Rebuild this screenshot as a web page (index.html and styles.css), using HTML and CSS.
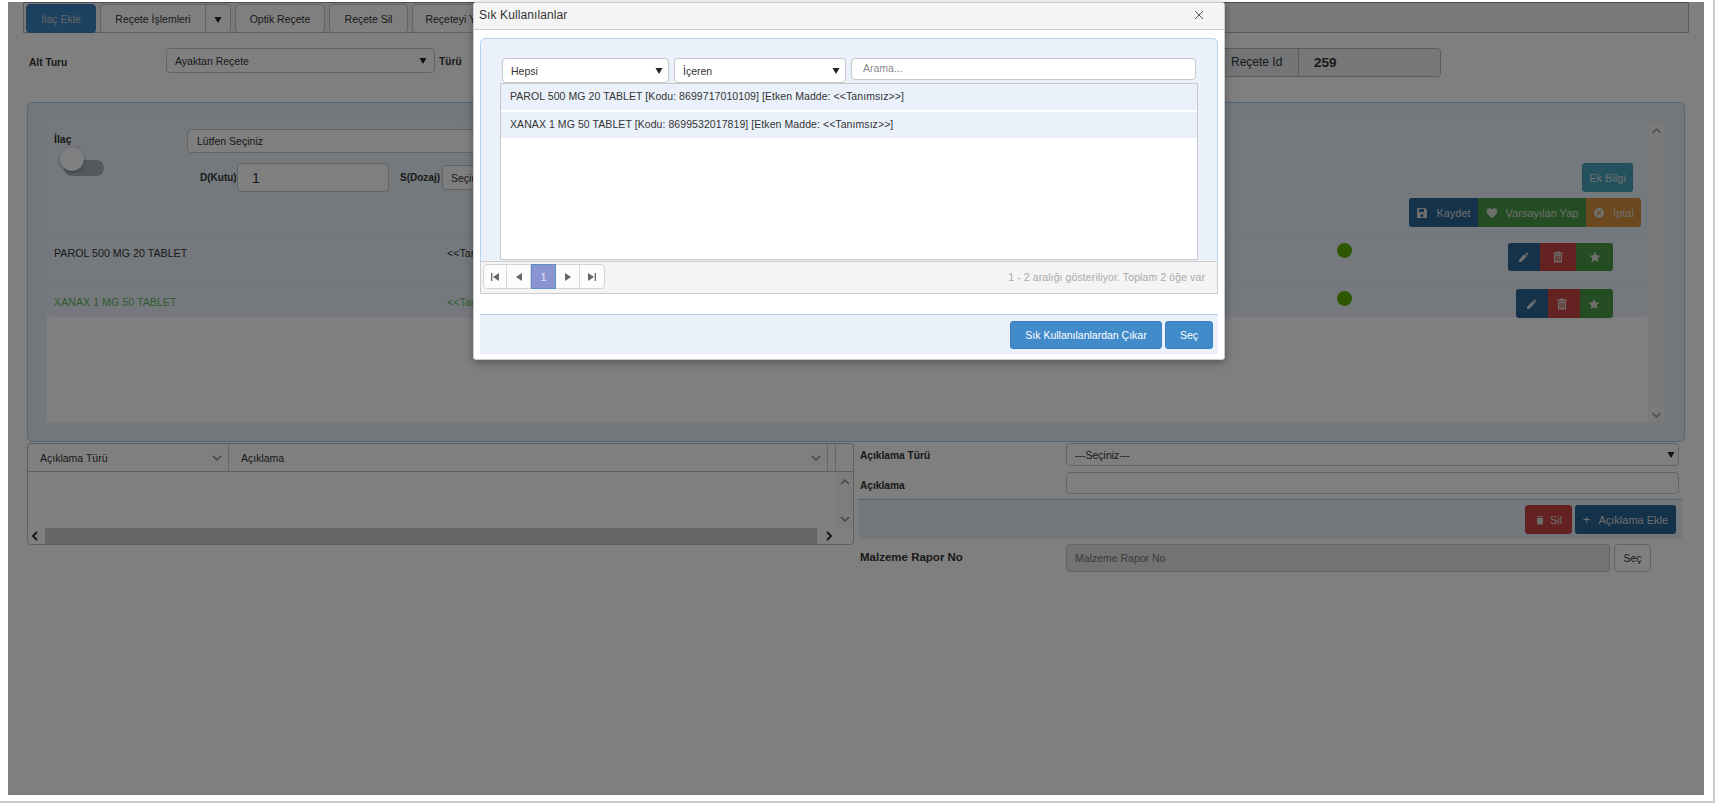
FILE: index.html
```html
<!DOCTYPE html>
<html lang="tr">
<head>
<meta charset="utf-8">
<title>Reçete</title>
<link rel="stylesheet" href="styles.css">
</head>
<body>
<svg class="defs" width="0" height="0" aria-hidden="true">
  <symbol id="i-down" viewBox="0 0 8 8"><path d="M0 1h8L4 8z"/></symbol>
  <symbol id="i-save" viewBox="0 0 12 12"><path fill-rule="evenodd" d="M1.500 1H9l2 2v7.500a.5.5 0 0 1-.5.5h-9a.5.5 0 0 1-.5-.5v-9a.5.5 0 0 1 .5-.5zM3 2v3h5V2zm3 5a1.500 1.500 0 1 0 0 3 1.500 1.500 0 0 0 0-3z"/></symbol>
  <symbol id="i-heart" viewBox="0 0 12 12"><path d="M6 11.200C3 8.700.6 6.800.6 4.200.6 2.500 1.900 1.200 3.500 1.200c1 0 1.900.5 2.500 1.400.6-.9 1.500-1.400 2.500-1.400 1.600 0 2.900 1.300 2.900 3 0 2.600-2.400 4.500-5.400 7z"/></symbol>
  <symbol id="i-cancel" viewBox="0 0 12 12"><path fill-rule="evenodd" d="M6 1a5 5 0 1 1 0 10A5 5 0 0 1 6 1zM4.400 3.700l-.7.7L5.300 6 3.700 7.600l.7.7L6 6.700l1.600 1.600.7-.7L6.700 6l1.600-1.600-.7-.7L6 5.300z"/></symbol>
  <symbol id="i-pencil" viewBox="0 0 12 12"><path d="M8.600 1.200l2.200 2.200-1.200 1.200-2.200-2.200zM6.700 3.100l2.200 2.200-5.700 5.700H1V8.800z"/></symbol>
  <symbol id="i-trash" viewBox="0 0 12 12"><path fill-rule="evenodd" d="M4.500.6h3l.5 1h3v1.200H1V1.600h3zM2 3.500h8v7.900H2zm1.400 1.200v5.500h1.100V4.700zm2.100 0v5.500h1.100V4.700zm2.100 0v5.500h1.100V4.700z"/></symbol>
  <symbol id="i-can" viewBox="0 0 12 12"><path d="M2.500 1.500h7v1h-7zM2.500 3.200h7v7.300a1 1 0 0 1-1 1h-5a1 1 0 0 1-1-1z"/></symbol>
  <symbol id="i-star" viewBox="0 0 12 12"><path d="M6 .8l1.600 3.500 3.800.4-2.800 2.600.8 3.800L6 9.200l-3.400 1.900.8-3.800L.6 4.700l3.800-.4z"/></symbol>
  <symbol id="i-first" viewBox="0 0 10 10"><path d="M1 1h1.300v8H1zM9 1v8L3 5z"/></symbol>
  <symbol id="i-prev" viewBox="0 0 10 10"><path d="M8 1v8L2 5z"/></symbol>
  <symbol id="i-next" viewBox="0 0 10 10"><path d="M2 1v8l6-4z"/></symbol>
  <symbol id="i-last" viewBox="0 0 10 10"><path d="M1 1v8l6-4zM7.700 1H9v8H7.700z"/></symbol>
  <symbol id="i-up-chev" viewBox="0 0 10 10"><path d="M1 7l4-4 4 4" fill="none" stroke="currentColor" stroke-width="1.500"/></symbol>
  <symbol id="i-down-chev" viewBox="0 0 10 10"><path d="M1 3l4 4 4-4" fill="none" stroke="currentColor" stroke-width="1.500"/></symbol>
  <symbol id="i-left-chev" viewBox="0 0 10 10"><path d="M7 1L3 5l4 4" fill="none" stroke="currentColor" stroke-width="2"/></symbol>
  <symbol id="i-right-chev" viewBox="0 0 10 10"><path d="M3 1l4 4-4 4" fill="none" stroke="currentColor" stroke-width="2"/></symbol>
</svg>

<div class="frame">
  <div class="toolbar">
    <button class="tb tb-primary tb-first">İlaç Ekle</button>
    <div class="split">
      <button class="tb tb-split-main">Reçete İşlemleri</button>
      <button class="tb tb-split-arrow"><svg class="arrow"><use href="#i-down"/></svg></button>
    </div>
    <button class="tb tb-optik">Optik Reçete</button>
    <button class="tb tb-sil">Reçete Sil</button>
    <button class="tb tb-yaz">Reçeteyi Yazdır</button>
  </div>

  <div class="head">
    <label class="lbl-bold alt">Alt Turu</label>
    <div class="fake-select alt-select"><span>Ayaktan Reçete</span><svg class="arrow"><use href="#i-down"/></svg></div>
    <label class="lbl-bold turu">Türü</label>
    <div class="idgroup">
      <span class="id-addon">Reçete Id</span>
      <span class="id-value">259</span>
    </div>
  </div>

  <section class="panel">
    <div class="scroller">
      <div class="content">
        <div class="form">
          <div class="form-left">
            <span class="lbl-ilac">İlaç</span>
            <div class="toggle"><span class="knob"></span></div>
          </div>
          <div class="form-mid">
            <div class="fake-select drug-select"><span>Lütfen Seçiniz</span></div>
            <div class="dose-row">
              <label class="lbl-bold dk">D(Kutu)</label>
              <div class="qty">1</div>
              <label class="lbl-bold ds">S(Dozaj)</label>
              <div class="fake-select dose-select"><span>Seçiniz</span></div>
            </div>
          </div>
          <div class="form-right">
            <button class="btn btn-info ek">Ek Bilgi</button>
            <div class="group">
              <button class="btn btn-blue kaydet"><svg class="ico"><use href="#i-save"/></svg>Kaydet</button>
              <button class="btn btn-green varsayilan"><svg class="ico"><use href="#i-heart"/></svg>Varsayılan Yap</button>
              <button class="btn btn-orange iptal"><svg class="ico"><use href="#i-cancel"/></svg>İptal</button>
            </div>
          </div>
        </div>

        <div class="row row-a">
          <span class="cell-name">PAROL 500 MG 20 TABLET</span>
          <span class="cell-etken">&lt;&lt;Tanımsız&gt;&gt;</span>
          <span class="dot"></span>
          <div class="group actions">
            <button class="btn btn-blue act a-pen"><svg class="ico"><use href="#i-pencil"/></svg></button>
            <button class="btn btn-red act a-trash"><svg class="ico"><use href="#i-trash"/></svg></button>
            <button class="btn btn-green act a-star"><svg class="ico"><use href="#i-star"/></svg></button>
          </div>
        </div>
        <div class="row row-b">
          <span class="cell-name">XANAX 1 MG 50 TABLET</span>
          <span class="cell-etken">&lt;&lt;Tanımsız&gt;&gt;</span>
          <span class="dot"></span>
          <div class="group actions">
            <button class="btn btn-blue act b-pen"><svg class="ico"><use href="#i-pencil"/></svg></button>
            <button class="btn btn-red act b-trash"><svg class="ico"><use href="#i-trash"/></svg></button>
            <button class="btn btn-green act b-star"><svg class="ico"><use href="#i-star"/></svg></button>
          </div>
        </div>
      </div>
      <div class="vscroll">
        <svg class="chev"><use href="#i-up-chev"/></svg>
        <svg class="chev"><use href="#i-down-chev"/></svg>
      </div>
    </div>
  </section>

  <div class="lower">
    <div class="grid-box">
      <div class="grid-head">
        <div class="gh gh-1"><span>Açıklama Türü</span><svg class="chev-s"><use href="#i-down-chev"/></svg></div>
        <div class="gh gh-2"><span>Açıklama</span><svg class="chev-s"><use href="#i-down-chev"/></svg></div>
        <div class="gh gh-3"></div>
      </div>
      <div class="grid-body">
        <div class="grid-empty"></div>
        <div class="grid-vbar">
          <svg class="chev-s"><use href="#i-up-chev"/></svg>
          <svg class="chev-s"><use href="#i-down-chev"/></svg>
        </div>
      </div>
      <div class="grid-hbar">
        <svg class="chev-h"><use href="#i-left-chev"/></svg>
        <div class="thumb"></div>
        <svg class="chev-h"><use href="#i-right-chev"/></svg>
      </div>
    </div>

    <div class="note-form">
      <div class="nf-row nf-1">
        <label class="lbl-bold nf-label nf-label-mid">Açıklama Türü</label>
        <div class="fake-select nf-select"><span>---Seçiniz---</span><svg class="arrow"><use href="#i-down"/></svg></div>
      </div>
      <div class="nf-row nf-2">
        <label class="lbl-bold nf-label nf-label-low">Açıklama</label>
        <div class="nf-input"></div>
      </div>
      <div class="nf-actions">
        <button class="btn btn-red sil"><svg class="ico"><use href="#i-can"/></svg>Sil</button>
        <button class="btn btn-blue ekle"><span class="plus">+</span>Açıklama Ekle</button>
      </div>
      <div class="nf-row nf-3">
        <label class="lbl-bold nf-label rapor">Malzeme Rapor No</label>
        <div class="rapor-input">Malzeme Rapor No</div>
        <button class="tb rapor-btn">Seç</button>
      </div>
    </div>
  </div>
</div>

<div class="backdrop"></div>

<div class="modal">
  <header class="modal-title">
    <span>Sık Kullanılanlar</span>
    <svg class="close" viewBox="0 0 10 10"><path d="M1 1l8 8M9 1L1 9" stroke="#555" stroke-width="1" fill="none"/></svg>
  </header>
  <div class="modal-panel">
    <div class="m-filters">
      <div class="fake-select m-sel1"><span>Hepsi</span><svg class="arrow"><use href="#i-down"/></svg></div>
      <div class="fake-select m-sel2"><span>İçeren</span><svg class="arrow"><use href="#i-down"/></svg></div>
      <div class="m-search">Arama...</div>
    </div>
    <div class="m-list">
      <div class="m-item">PAROL 500 MG 20 TABLET [Kodu: 8699717010109] [Etken Madde: &lt;&lt;Tanımsız&gt;&gt;]</div>
      <div class="m-item">XANAX 1 MG 50 TABLET [Kodu: 8699532017819] [Etken Madde: &lt;&lt;Tanımsız&gt;&gt;]</div>
    </div>
    <div class="m-pager">
      <div class="pager">
        <span class="pg"><svg class="pgi"><use href="#i-first"/></svg></span>
        <span class="pg"><svg class="pgi"><use href="#i-prev"/></svg></span>
        <span class="pg pg-on">1</span>
        <span class="pg"><svg class="pgi"><use href="#i-next"/></svg></span>
        <span class="pg"><svg class="pgi"><use href="#i-last"/></svg></span>
      </div>
      <span class="pg-info">1 - 2 aralığı gösteriliyor. Toplam 2 öğe var</span>
    </div>
  </div>
  <footer class="modal-foot">
    <button class="m-btn m-remove">Sık Kullanılanlardan Çıkar</button>
    <button class="m-btn m-pick">Seç</button>
  </footer>
</div>
</body>
</html>
```

FILE: styles.css
```css
* { box-sizing: border-box; }
html, body { margin: 0; padding: 0; background: #fff; overflow: hidden; }
body { font-family: "Liberation Sans", Arial, sans-serif; font-size: 11px; color: #333; height: 812px; }
.defs { display: block; height: 0; }
button { font-family: inherit; font-size: 11px; cursor: pointer; margin: 0; }

.frame { width: 1715px; height: 803px; border-right: 2px solid #ccc; border-bottom: 2px solid #ccc; padding-top: 2px; overflow: hidden; }

.arrow { width: 8px; height: 7px; fill: #222; flex: none; }

.toolbar { margin-left: 23px; width: 1666px; height: 31px; border: 1px solid #b4b4b4; border-top-color: #999; background: #f5f5f5; display: flex; padding: 1px 0 0 2px; }
.tb { background: #fff; border: 1px solid #c8c8c8; border-radius: 4px; height: 29px; padding: 0; color: #333; font-size: 10.500px; }
.tb-primary { background: #3a82c0; border-color: #3b7fb8; color: #ccc; width: 70px; }
.split { display: flex; margin-left: 4px; }
.tb-split-main { width: 105px; border-radius: 4px 0 0 4px; border-right: 0; }
.tb-split-arrow { width: 26px; border-radius: 0 4px 4px 0; }
.tb-optik { width: 90px; margin-left: 4px; }
.tb-sil { width: 79px; margin-left: 4px; }
.tb-yaz { width: 100px; margin-left: 4px; }

.lbl-bold { font-weight: bold; color: #333; font-size: 10.200px; }

.fake-select { display: flex; align-items: center; justify-content: space-between; background: #fff; border: 1px solid #c8c8c8; border-radius: 4px; font-size: 10.500px; color: #333; }
.head { margin-top: 15px; height: 29px; display: flex; align-items: flex-start; padding-left: 29px; position: relative; }
.alt { width: 137px; line-height: 29px; }
.alt-select { width: 269px; height: 25px; padding: 0 7px 0 8px; }
.turu { margin-left: 4px; line-height: 27px; }
.idgroup { width: 241px; height: 29px; display: flex; border: 1px solid #b8b8b8; border-radius: 4px; overflow: hidden; margin-left: auto; margin-right: 272px; }
.id-addon { width: 98px; background: #e6eaee; border-right: 1px solid #b8b8b8; font-size: 12px; line-height: 27px; padding-left: 30px; color: #333; flex: none; }
.id-value { flex: 1; background: #eee; font-weight: bold; font-size: 13.500px; line-height: 27px; padding-left: 15px; color: #333; }

.panel { margin: 25px 0 0 27px; width: 1658px; height: 340px; background: #e7f0fb; border: 1px solid #a9c9e8; border-radius: 5px; padding: 19px 18px 19px 19px; }
.scroller { display: flex; height: 300px; }
.content { width: 1601px; background: #fff; display: flex; flex-direction: column; }
.vscroll { width: 17px; background: #f4f4f4; display: flex; flex-direction: column; justify-content: space-between; align-items: center; padding: 4px 0 2px; color: #999; }
.chev { width: 11px; height: 10px; }

.form { height: 112px; display: flex; background: #e9f2fb; }
.form-left { width: 140px; padding: 11px 0 0 7px; position: relative; }
.lbl-ilac { font-weight: bold; font-size: 10.500px; }
.toggle { margin: 15px 0 0 10px; width: 40px; height: 16px; border-radius: 8px; background: #a8b0b8; position: relative; }
.knob { position: absolute; left: -4px; top: -13px; width: 24px; height: 24px; border-radius: 50%; background: #fff; box-shadow: 0 1px 3px rgba(0,0,0,.4); }
.form-mid { width: 800px; padding-top: 7px; }
.drug-select { height: 24px; padding: 0 9px; }
.dose-row { display: flex; margin-top: 10px; align-items: flex-start; }
.dk { margin-left: 13px; width: 37px; line-height: 29px; font-size: 10px; }
.qty { width: 152px; height: 29px; border: 1px solid #c8c8c8; border-radius: 4px; background: #fff; font-size: 14px; line-height: 29px; padding-left: 14px; }
.ds { margin-left: 11px; width: 42px; line-height: 29px; font-size: 10px; }
.dose-select { width: 200px; height: 25px; margin-top: 2px; padding: 0 8px; }
.form-right { margin-left: auto; padding: 41px 7px 0 0; display: flex; flex-direction: column; align-items: flex-end; }

.btn { border: 0; color: #ddd; height: 29px; padding: 0; display: inline-flex; align-items: center; justify-content: center; font-size: 11px; }
.ico { width: 12px; height: 12px; fill: #ddd; flex: none; }
.btn-info { background: #46a4bc; border: 1px solid #3f98b0; border-radius: 3px; }
.btn-blue { background: #2a6496; }
.btn-green { background: #4a9a48; }
.btn-red { background: #c94444; }
.btn-orange { background: #d9913c; }
.ek { width: 51px; margin-right: 8px; }
.group { display: flex; border-radius: 3px; overflow: hidden; }
.form-right .group { margin-top: 6px; }
.kaydet { width: 69px; }
.varsayilan { width: 108px; }
.iptal { width: 55px; }
.kaydet .ico, .varsayilan .ico, .iptal .ico { margin-right: 8px; }

.row { display: flex; flex: none; padding-left: 7px; }
.row-a { height: 49px; background: #ebf3fb; border-top: 1px solid #dde6ef; border-bottom: 1px solid #dde6ef; padding-top: 12px; padding-right: 35px; }
.row-b { height: 34px; background: #ebf3fb; border-radius: 0 0 4px 4px; padding-top: 13px; padding-right: 35px; }
.cell-name { width: 393px; font-size: 10.700px; line-height: 13px; color: #333; }
.row-b .cell-name, .row-b .cell-etken { color: #5cb85c; }
.cell-etken { width: 890px; font-size: 10.700px; line-height: 13px; color: #333; flex: none; }
.dot { width: 15px; height: 15px; border-radius: 50%; background: #5cb000; margin-top: -4px; flex: none; }
.row-b .dot { margin-top: -5px; }
.row-a .actions { margin: -4px 0 0 auto; height: 28px; }
.row-b .actions { margin: -7px 0 0 auto; height: 29px; }
.act { height: 100%; }
.a-pen { width: 32px; } .a-trash { width: 36px; } .a-star { width: 37px; }
.b-pen { width: 32px; } .b-trash { width: 32px; padding-right: 4px; } .b-star { width: 33px; padding-right: 5px; }

.lower { display: flex; margin: 1px 0 0 27px; }
.grid-box { width: 827px; height: 102px; border: 1px solid #bdbdbd; border-radius: 4px; background: #fff; display: flex; flex-direction: column; }
.grid-head { display: flex; height: 28px; border-bottom: 1px solid #bdbdbd; flex: none; }
.gh { display: flex; align-items: center; justify-content: space-between; font-size: 10.500px; color: #333; border-right: 1px solid #ccc; }
.gh-1 { width: 201px; padding: 0 6px 0 12px; }
.gh-2 { width: 599px; padding: 0 6px 0 12px; }
.gh-3 { width: 8px; }
.chev-s { width: 10px; height: 10px; color: #888; }
.grid-body { flex: 1; display: flex; }
.grid-empty { flex: 1; }
.grid-vbar { width: 16px; display: flex; flex-direction: column; justify-content: space-between; align-items: center; padding: 5px 0 4px; background: #fafafa; }
.grid-hbar { height: 16px; display: flex; align-items: center; padding: 0 2px; flex: none; }
.chev-h { width: 10px; height: 10px; color: #333; flex: none; }
.thumb { width: 772px; height: 16px; background: #cdcdcd; margin: 0 7px 0 5px; }

.note-form { margin-left: 4px; width: 828px; display: flex; flex-direction: column; }
.nf-row { display: flex; align-items: center; }
.nf-label { width: 208px; padding-left: 2px; }
.nf-label-mid { padding-top: 2px; }
.nf-label-low { padding-top: 4px; }
.nf-1 { height: 23px; }
.nf-select { width: 613px; height: 23px; padding: 0 3px 0 8px; }
.nf-2 { height: 22px; margin-top: 6px; }
.nf-input { width: 613px; height: 22px; background: #fff; border: 1px solid #c8c8c8; border-radius: 4px; }
.nf-actions { margin-top: 5px; height: 40px; width: 824px; background: #e7f0fb; border-top: 1px solid #a9c9e8; display: flex; justify-content: flex-end; padding: 5px 6px 0 0; gap: 3px; }
.sil { width: 47px; border: 1px solid #c04040; border-radius: 3px; }
.sil .ico { margin-right: 5px; width: 10px; }
.ekle { width: 101px; border-radius: 3px; }
.plus { font-size: 13px; margin-right: 8px; }
.nf-3 { margin-top: 5px; height: 28px; }
.rapor { font-size: 11.500px; padding-bottom: 2px; }
.rapor-input { width: 544px; height: 28px; background: #e6e6e6; border: 1px solid #c8c8c8; border-radius: 3px; color: #777; font-size: 10.500px; line-height: 26px; padding-left: 8px; }
.rapor-btn { width: 37px; height: 28px; margin-left: 4px; }

.backdrop { position: absolute; left: 8px; top: 2px; width: 1696px; height: 793px; background: rgba(0,0,0,.5); }

.modal { position: absolute; left: 473px; top: 2px; width: 752px; height: 358px; background: #fff; border: 1px solid #ccc; border-radius: 3px; box-shadow: 0 2px 8px rgba(0,0,0,.35); padding-bottom: 6px; display: flex; flex-direction: column; }
.modal-title { height: 27px; flex: none; background: #f4f4f4; border-bottom: 1px solid #ccc; display: flex; align-items: center; justify-content: space-between; padding: 0 20px 2px 5px; font-size: 12px; letter-spacing: .1px; color: #333; }
.close { width: 10px; height: 10px; }
.modal-panel { margin: 8px 6px 0 6px; height: 256px; background: #eaf1fa; border: 1px solid #b6d4f1; border-radius: 5px 5px 0 0; display: flex; flex-direction: column; }
.m-filters { display: flex; padding: 19px 0 0 21px; height: 44px; flex: none; align-items: flex-start; }
.fake-select.m-sel1 { width: 167px; height: 25px; padding: 0 3px 0 8px; }
.fake-select.m-sel2 { width: 172px; height: 25px; padding: 0 3px 0 8px; margin-left: 5px; }
.fake-select.m-sel1 .arrow, .fake-select.m-sel2 .arrow { margin-right: 2px; }
.m-search { width: 345px; height: 22px; margin-left: 5px; background: #fff; border: 1px solid #c8c8c8; border-radius: 4px; color: #888; font-size: 10.500px; line-height: 18px; padding-left: 11px; }
.m-list { margin-left: 19px; width: 698px; height: 177px; background: #fff; border: 1px solid #c8c8c8; flex: none; }
.m-item { height: 26px; background: #eaf1fa; margin-bottom: 2px; font-size: 10.500px; letter-spacing: .073px; line-height: 25px; padding-left: 9px; color: #333; }
.m-pager { height: 33px; flex: none; background: #f4f4f4; border: 1px solid #ccc; margin: 1px -1px 0 -1px; display: flex; align-items: center; justify-content: space-between; padding: 0 12px 2px 2px; }
.pager { display: flex; height: 25px; border: 1px solid #d4d4d4; border-radius: 4px; background: #fcfcfc; }
.pg { width: 24px; display: flex; align-items: center; justify-content: center; border-right: 1px solid #d8d8d8; font-size: 11px; }
.pg:first-child { width: 23px; }
.pg:last-child { border-right: 0; }
.pg-on { width: 25px; background: #8a94d1; color: #e4e4f4; border: 1px solid #5a8fc8; margin: -1px 0; }
.pgi { width: 10px; height: 10px; fill: #666; }
.pg-info { font-size: 10.500px; letter-spacing: .1px; color: #aaa; }
.modal-foot { margin: 20px 6px 0 6px; height: 40px; flex: none; background: #eaf1fa; border-top: 1px solid #b6d4f1; display: flex; justify-content: flex-end; align-items: flex-start; padding: 6px 5px 0 0; gap: 3px; }
.m-btn { height: 28px; border: 1px solid #3a7fbd; background: #428bca; color: #fff; border-radius: 3px; font-size: 10.500px; padding: 0; }
.m-remove { width: 152px; }
.m-pick { width: 48px; }
```
